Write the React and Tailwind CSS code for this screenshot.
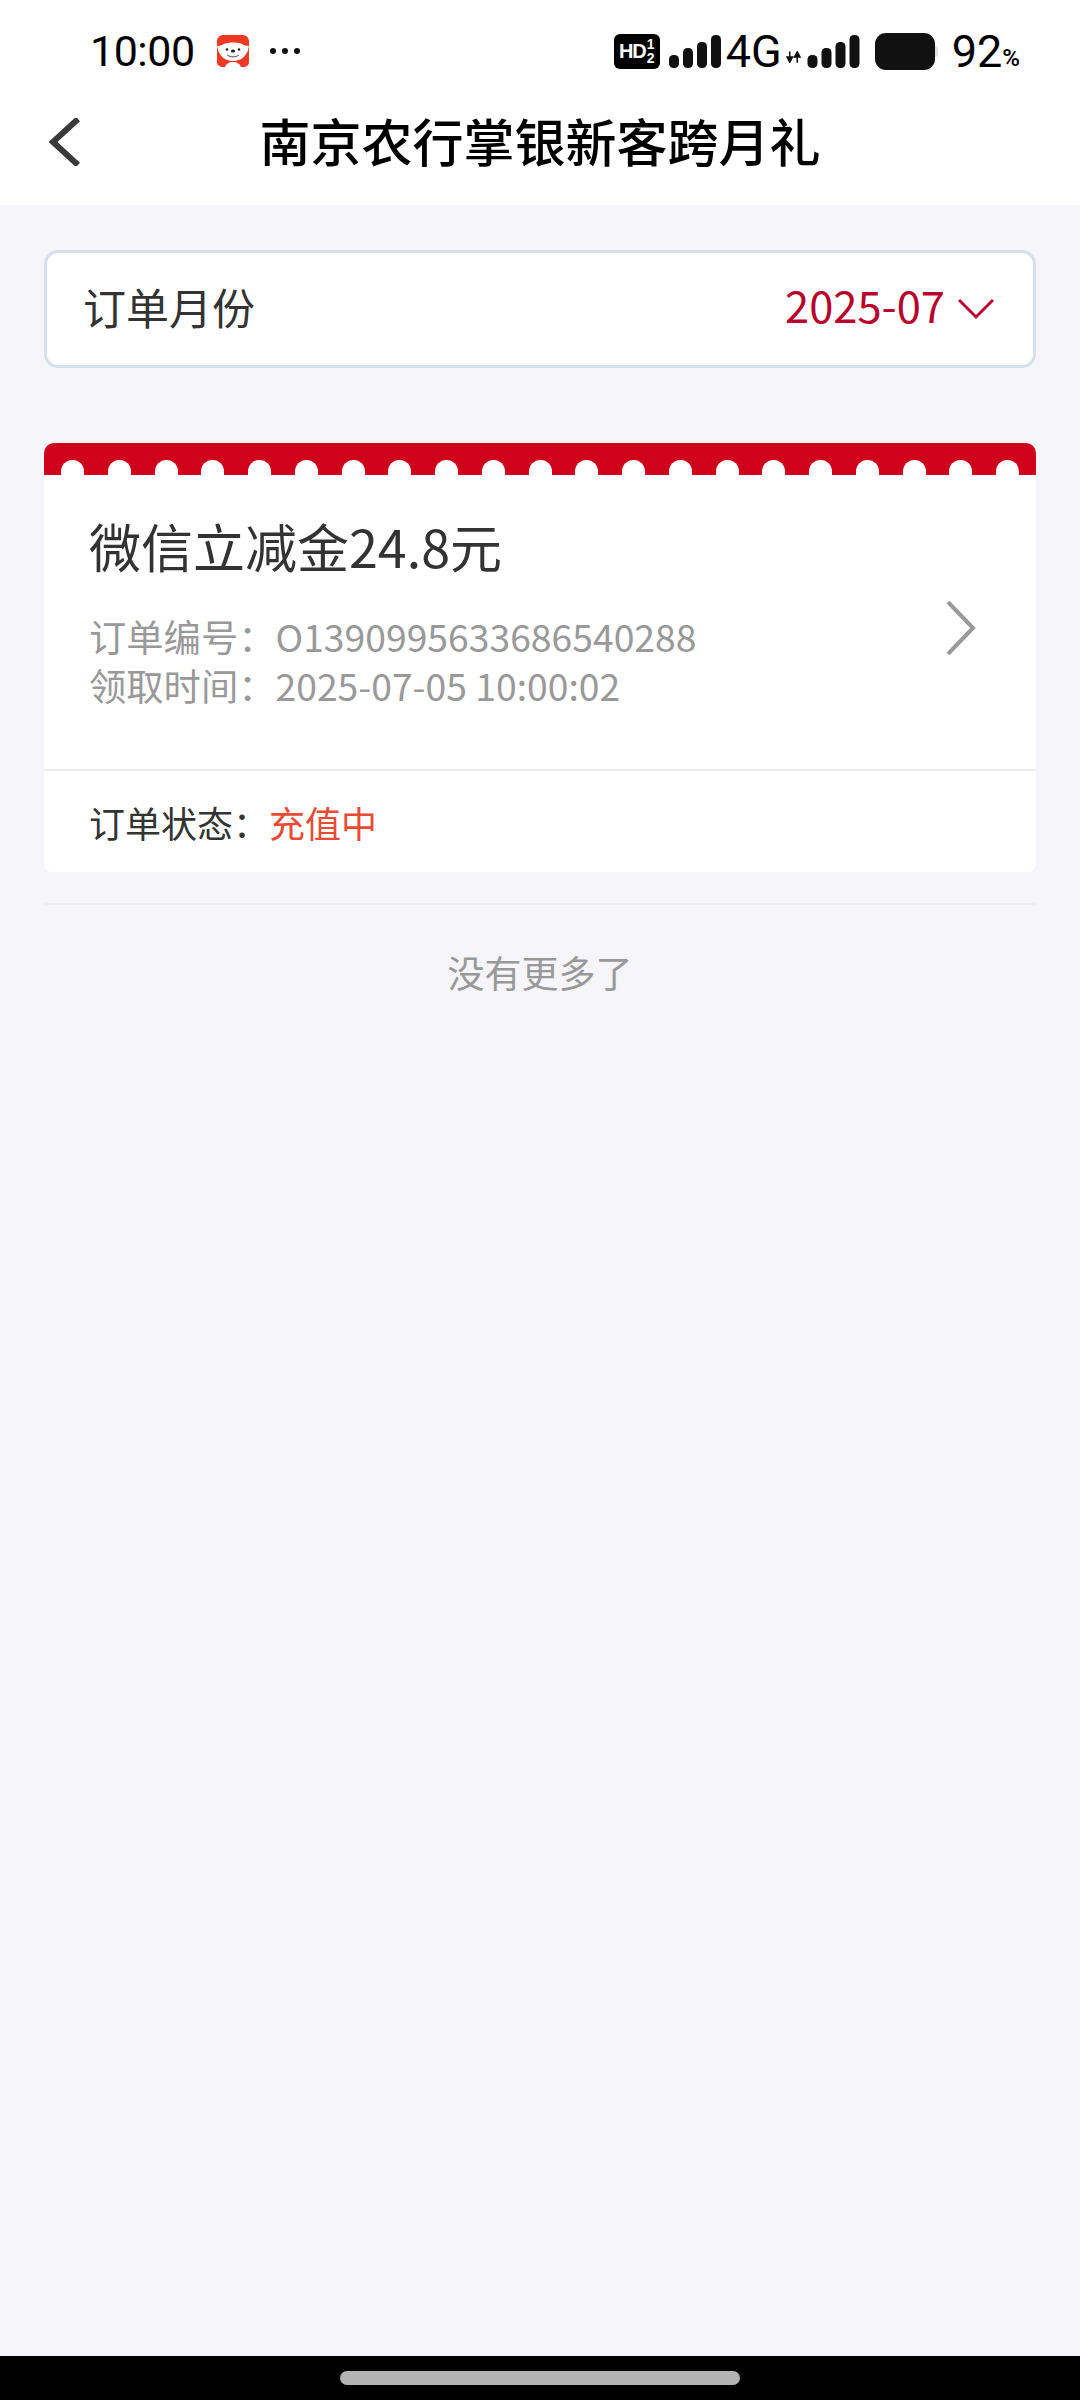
const cjk = { fontFamily: '"Noto Sans CJK SC", "Noto Sans", sans-serif' };

function Bars({ className }) {
  return (
    <svg viewBox="0 0 52 33" className={className} fill="#111">
      <rect x="0" y="20" width="10" height="13" rx="4.5" />
      <rect x="14" y="13" width="10" height="20" rx="4.5" />
      <rect x="28" y="7" width="10" height="26" rx="4.5" />
      <rect x="42" y="0" width="10" height="33" rx="4.5" />
    </svg>
  );
}

function Dog() {
  return (
    <svg viewBox="0 0 34 34" className="w-[34px] h-[34px]">
      <path d="M7 1h20a6 6 0 0 1 6 6v21a5 5 0 0 1-5 5h-3c-1-3-4-5-8-5s-7 2-8 5H6a5 5 0 0 1-5-5V7a6 6 0 0 1 6-6z" fill="#ee3a24" />
      <path d="M1 12c3 0 5-1 7-2 5-2 13-2 18 0 2 1 4 2 7 2-1 3-1 6-3 8-3 5-8 7-13 7S7 25 4 20c-2-2-2-5-3-8z" fill="#fff" />
      <circle cx="11" cy="15.5" r="1.3" fill="#222" />
      <circle cx="23" cy="15.5" r="1.3" fill="#222" />
      <ellipse cx="17" cy="17" rx="2.2" ry="1.5" fill="#222" />
      <path d="M11 21c4 2.5 8 2.5 12 0" stroke="#222" strokeWidth="0.8" fill="none" />
    </svg>
  );
}

export default function App() {
  return (
    <div className="h-[2400px] w-[1080px] flex flex-col bg-[#f5f5fa] overflow-hidden" style={cjk}>
      <header className="bg-white h-[205px] shrink-0 flex flex-col">
        <div className="h-[102px] flex items-center pl-[90px] pr-[60px] text-black">
          <span className="text-[43px] font-normal w-[126px] leading-none tracking-[-0.5px]" style={{ fontFamily: 'Roboto, sans-serif' }}>10:00</span>
          <span><Dog /></span>
          <span className="ml-[20px] flex gap-[6px]">
            <span className="w-[6px] h-[6px] rounded-full bg-[#111]" />
            <span className="w-[6px] h-[6px] rounded-full bg-[#111]" />
            <span className="w-[6px] h-[6px] rounded-full bg-[#111]" />
          </span>
          <span className="ml-auto flex items-center">
            <span className="w-[46px] h-[35px] rounded-[6px] bg-black text-white flex items-center justify-center font-bold" style={{ fontFamily: '"Liberation Sans", sans-serif' }}>
              <span className="text-[20px] leading-none tracking-[-1px]">HD</span>
              <span className="flex flex-col items-center text-[14px] leading-[14px] ml-[1px]"><span>1</span><span>2</span></span>
            </span>
            <Bars className="w-[52px] h-[33px] ml-[9px]" />
            <span className="text-[45px] leading-none font-normal ml-[5px] w-[55px]" style={{ fontFamily: 'Roboto, sans-serif' }}>4G</span>
            <svg viewBox="0 0 16 12" className="w-[15px] h-[12px] ml-[5px] mt-[12px]">
              <path d="M4 0v7M1 6 4 11.5 7 6z" stroke="#111" strokeWidth="1.6" fill="#111" />
              <path d="M12 12V5M9 6 12 .5 15 6z" stroke="#111" strokeWidth="1.6" fill="#111" />
            </svg>
            <Bars className="w-[53px] h-[33px] ml-[6px]" />
            <span className="ml-[15px] w-[60px] h-[37px] rounded-[11px] bg-[#111]" />
            <span className="w-[3px] h-[11px] bg-[#ddd] rounded-r-full" />
            <span className="ml-[14px] text-[45px] leading-none font-normal" style={{ fontFamily: 'Roboto, sans-serif' }}>92</span>
            <span className="text-[24px] leading-none self-end mb-[4px] font-medium" style={{ fontFamily: 'Roboto, sans-serif' }}>%</span>
          </span>
        </div>
        <div className="relative flex-1 flex items-start justify-center">
          <svg viewBox="0 0 32 48" className="absolute left-[48px] top-[16px] w-[32px] h-[48px]" fill="none" stroke="#3a3a3a" strokeWidth="6">
            <path d="M30 1 5 24l25 23" />
          </svg>
          <h1 className="text-[51px] leading-[76px] font-medium text-black">南京农行掌银新客跨月礼</h1>
        </div>
      </header>

      <main className="flex-1 px-[44px] pt-[45px]">
        <div className="h-[118px] rounded-[14px] border-[3px] border-[#d5e0ea] bg-white flex items-center pl-[36px] pr-[39px]">
          <span className="text-[43px] text-[#333] mb-[6px]">订单月份</span>
          <span className="ml-auto text-[43.5px] text-[#b8042c] leading-none mb-[9px]">2025-07</span>
          <svg viewBox="0 0 36 22" className="ml-[13px] w-[36px] h-[22px]" fill="none" stroke="#b8042c" strokeWidth="3">
            <path d="M1 2l17 17L35 2" />
          </svg>
        </div>

        <section className="mt-[75px]">
          <div className="h-[32px] bg-[#d0021b] rounded-t-[10px] flex items-end justify-between px-[17px]">
            {Array.from({ length: 21 }).map((_, i) => (
              <span key={i} className="w-[23px] h-[15px] bg-white rounded-t-full" />
            ))}
          </div>
          <div className="bg-white rounded-b-[8px]">
            <div className="relative pl-[45px] pt-[41px] pb-[59px] border-b-[2px] border-[#eeeeee]">
              <div className="text-[52px] leading-[60px] text-[#333]">微信立减金24.8元</div>
              <div className="mt-[36px] text-[37.3px] leading-[49px] text-[#999]">
                <div>订单编号：O1390995633686540288</div>
                <div>领取时间：2025-07-05 10:00:02</div>
              </div>
              <svg viewBox="0 0 30 54" className="absolute right-[60px] top-[126px] w-[30px] h-[54px]" fill="none" stroke="#999" strokeWidth="4">
                <path d="M2 1l25 26L2 53" />
              </svg>
            </div>
            <div className="h-[101px] pl-[45px] flex items-center text-[36px]">
              <span className="text-[#333]">订单状态：</span>
              <span className="text-[#e94a35]">充值中</span>
            </div>
          </div>
        </section>

        <div className="mt-[31px] border-t-[2px] border-[#eeeff3] pt-[40px] text-center text-[37px] leading-[54px] text-[#999]">没有更多了</div>
      </main>

      <footer className="h-[44px] shrink-0 bg-black flex items-center justify-center">
        <span className="w-[400px] h-[14px] rounded-full bg-[#b3b3b3]" />
      </footer>
    </div>
  );
}
